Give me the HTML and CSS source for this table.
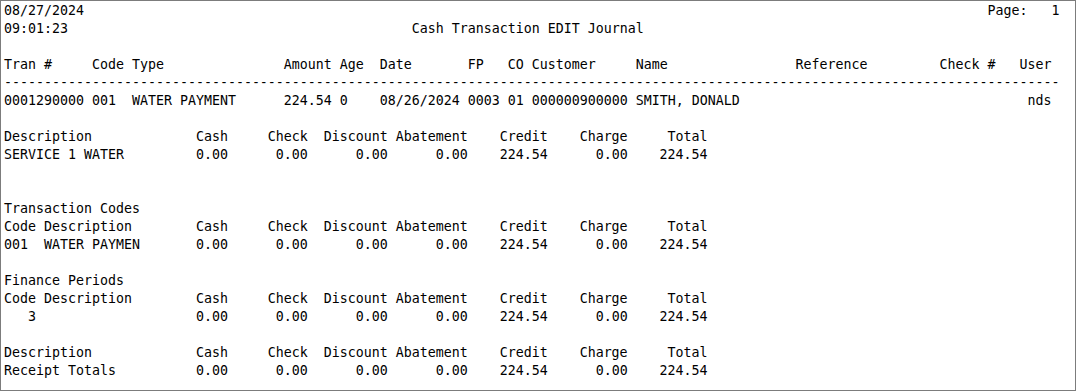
FILE: index.html
```html
<!DOCTYPE html>
<html>
<head>
<meta charset="utf-8">
<link rel="stylesheet" href="styles.css">
</head>
<body>
<div class="report">
  <div class="line split"><span>08/27/2024</span><span>Page:   1</span></div>
  <div class="line"><span>09:01:23</span><span class="title">Cash Transaction EDIT Journal</span></div>
  <div class="line"></div>
  <div class="line">Tran #     Code Type               Amount Age  Date       FP   CO Customer     Name                Reference         Check #   User</div>
  <div class="line rule"></div>
  <div class="line">0001290000 001  WATER PAYMENT      224.54 0    08/26/2024 0003 01 000000900000 SMITH, DONALD<span class="user">nds</span></div>
  <div class="line"></div>

  <div class="sum">
    <span class="lbl">Description</span><span>Cash</span><span>Check</span><span>Discount</span><span>Abatement</span><span>Credit</span><span>Charge</span><span>Total</span>
    <span class="lbl">SERVICE 1 WATER</span><span>0.00</span><span>0.00</span><span>0.00</span><span>0.00</span><span>224.54</span><span>0.00</span><span>224.54</span>
  </div>
  <div class="line"></div>
  <div class="line"></div>

  <div class="line">Transaction Codes</div>
  <div class="sum">
    <span class="lbl">Code Description</span><span>Cash</span><span>Check</span><span>Discount</span><span>Abatement</span><span>Credit</span><span>Charge</span><span>Total</span>
    <span class="lbl">001  WATER PAYMEN</span><span>0.00</span><span>0.00</span><span>0.00</span><span>0.00</span><span>224.54</span><span>0.00</span><span>224.54</span>
  </div>
  <div class="line"></div>

  <div class="line">Finance Periods</div>
  <div class="sum">
    <span class="lbl">Code Description</span><span>Cash</span><span>Check</span><span>Discount</span><span>Abatement</span><span>Credit</span><span>Charge</span><span>Total</span>
    <span class="lbl">   3</span><span>0.00</span><span>0.00</span><span>0.00</span><span>0.00</span><span>224.54</span><span>0.00</span><span>224.54</span>
  </div>
  <div class="line"></div>

  <div class="sum">
    <span class="lbl">Description</span><span>Cash</span><span>Check</span><span>Discount</span><span>Abatement</span><span>Credit</span><span>Charge</span><span>Total</span>
    <span class="lbl">Receipt Totals</span><span>0.00</span><span>0.00</span><span>0.00</span><span>0.00</span><span>224.54</span><span>0.00</span><span>224.54</span>
  </div>
</div>
</body>
</html>
```
FILE: styles.css
```css
html, body {
  margin: 0;
  padding: 0;
  background: #ffffff;
}

.report {
  box-sizing: border-box;
  width: 1076px;
  height: 391px;
  border: 1px solid #7c7c7c;
  padding: 1px 0 0 3px;
  font-family: "DejaVu Sans Mono", "Liberation Mono", monospace;
  font-size: 13.29px;
  line-height: 18px;
  color: #000000;
  overflow: hidden;
}

.line {
  width: 132ch;
  height: 18px;
  white-space: pre;
}

.split {
  display: flex;
  justify-content: space-between;
}

.title {
  margin-left: 43ch;
}

.rule::before {
  content: "------------------------------------------------------------------------------------------------------------------------------------";
}

.user {
  margin-left: 36ch;
}

.sum {
  display: grid;
  grid-template-columns: 24ch 4ch repeat(6, 10ch);
  grid-auto-rows: 18px;
}

.sum span {
  text-align: right;
  white-space: pre;
}

.sum .lbl {
  text-align: left;
}
```
